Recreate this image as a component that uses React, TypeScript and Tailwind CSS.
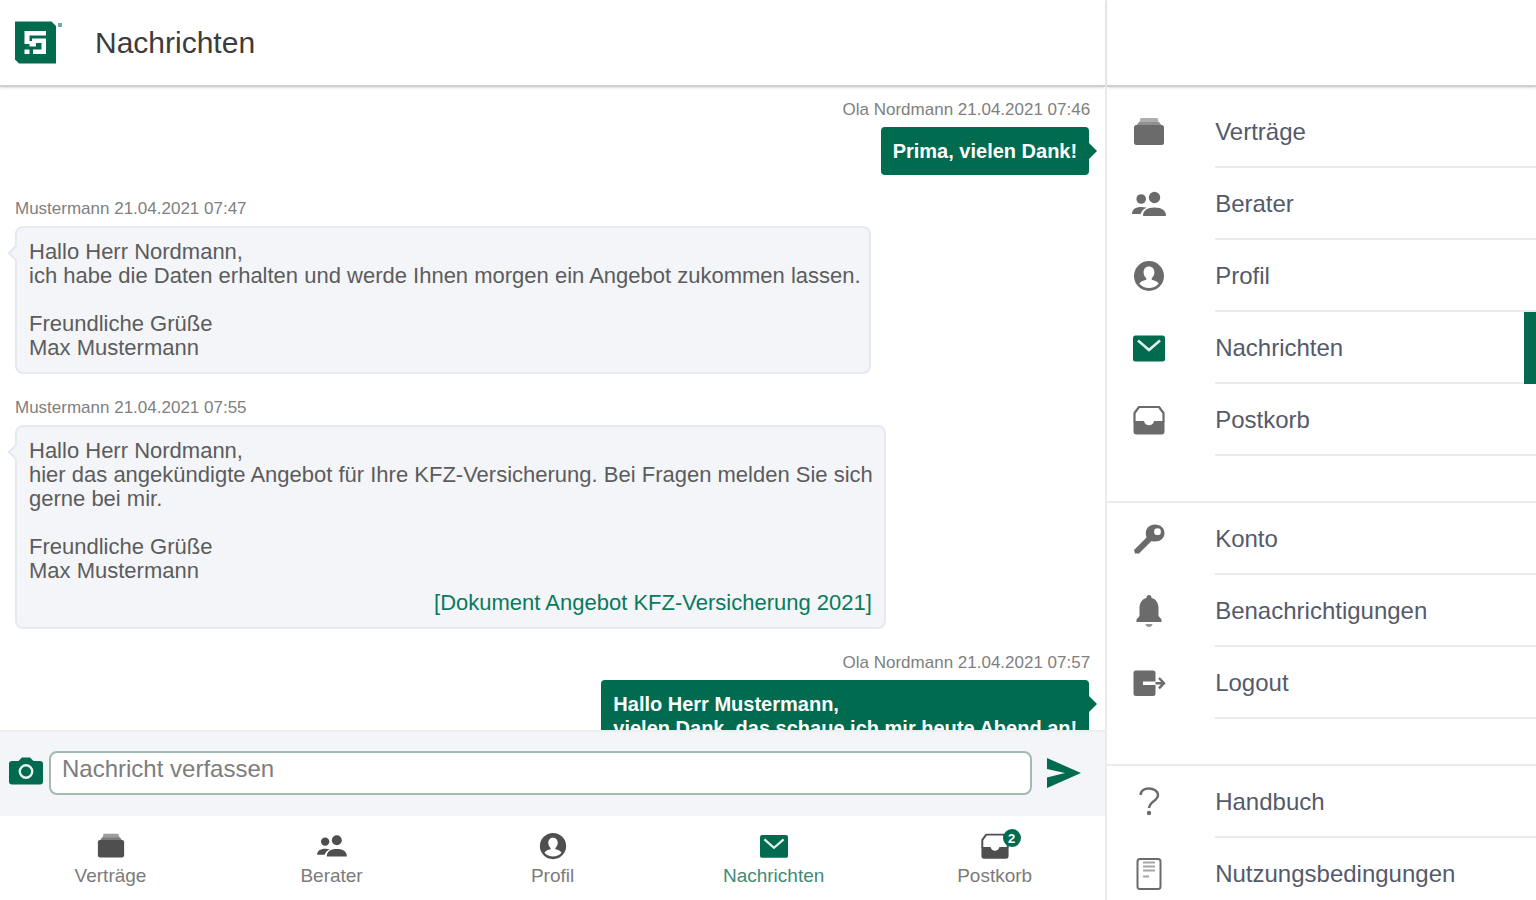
import React from "react";

type IconProps = { className?: string };

function ContractsIcon({ className }: IconProps) {
  return (
    <svg viewBox="0 0 32 32" className={className} fill="currentColor" aria-hidden="true">
      <path d="M7.500 2h17l1 4h-19z" opacity="0.55" />
      <path d="M6 6h20l3 4H3z" opacity="0.75" />
      <rect x="1" y="9" width="30" height="20" rx="2.500" />
    </svg>
  );
}

function PeopleIcon({ className }: IconProps) {
  return (
    <svg viewBox="0 0 32 32" className={className} fill="currentColor" aria-hidden="true">
      <circle cx="21.500" cy="9.500" r="5.700" />
      <circle cx="8.200" cy="11" r="4.800" />
      <path d="M10 28c0-5.500 4-8.500 11.500-8.500S33 22.500 33 28z" />
      <path d="M-1 26c0-4.500 3.500-7 9.500-7 1.800 0 3.500.2 5 .7C10.500 21 8.500 23 7.600 26z" />
    </svg>
  );
}

function ProfileIcon({ className }: IconProps) {
  return (
    <svg viewBox="0 0 32 32" className={className} fill="currentColor" aria-hidden="true">
      <path
        fillRule="evenodd"
        d="M16 1a15 15 0 1 0 0 30 15 15 0 0 0 0-30zm0 5.500c3.300 0 5.400 2.400 5.400 5.800 0 2.600-1.100 4.700-2.700 5.900v1.500c3.500.7 6 2 7 4a13 13 0 0 1-19.400 0c1-2 3.500-3.300 7-4v-1.500c-1.600-1.200-2.700-3.300-2.700-5.900 0-3.400 2.100-5.800 5.400-5.800z"
      />
    </svg>
  );
}

function MailIcon({ className }: IconProps) {
  return (
    <svg viewBox="0 0 32 32" className={className} aria-hidden="true">
      <rect x="0" y="3.500" width="32" height="26" rx="2.500" fill="currentColor" />
      <path d="M5 8.500l11 9.500 11-9.500" fill="none" stroke="#e3f1ec" strokeWidth="2.600" />
    </svg>
  );
}

function InboxIcon({ className }: IconProps) {
  return (
    <svg viewBox="0 0 32 32" className={className} aria-hidden="true">
      <path d="M1.500 18V9l4.500-6h20l4.500 6v9" fill="none" stroke="currentColor" strokeWidth="2.200" strokeLinejoin="round" />
      <path d="M.5 17H11c.7 3 2.500 4.300 5 4.300s4.300-1.300 5-4.300h10.500v10.500A3 3 0 0 1 28.500 30.500h-25a3 3 0 0 1-3-3z" fill="currentColor" />
    </svg>
  );
}

function KeyIcon({ className }: IconProps) {
  return (
    <svg viewBox="0 0 32 32" className={className} aria-hidden="true">
      <path
        fillRule="evenodd"
        fill="currentColor"
        d="M22 1.500c5.500 0 9.500 3.500 9.500 8.500s-4 8.500-9.500 8.500c-1.300 0-2.500-.2-3.500-.6L6 30.500H2L1 27 13.500 14.500c-.4-1.200-.7-2.800-.7-4.200C12.800 5 16.500 1.500 22 1.500zm2.500 3.800a3.400 3.400 0 1 0 0 6.800 3.400 3.400 0 0 0 0-6.800z"
      />
    </svg>
  );
}

function BellIcon({ className }: IconProps) {
  return (
    <svg viewBox="0 0 32 32" className={className} fill="currentColor" aria-hidden="true">
      <path d="M16 0c1.500 0 2.500 1 2.500 2.500v.6C23 4.300 25.500 8 25.500 13v8l3 3.500V27h-25v-2.500l3-3.500v-8c0-5 2.500-8.700 7-9.900v-.6C13.500 1 14.500 0 16 0z" />
      <path d="M12.500 29h7c-.3 1.800-1.600 3-3.500 3s-3.200-1.200-3.500-3z" opacity="0.7" />
    </svg>
  );
}

function LogoutIcon({ className }: IconProps) {
  return (
    <svg viewBox="0 0 32 32" className={className} aria-hidden="true">
      <path d="M3 3.500h17a2.500 2.500 0 0 1 2.500 2.500v8.500H10v3.500h12.500v8.500a2.500 2.500 0 0 1-2.500 2.500H3A2.500 2.500 0 0 1 .5 26.500V6A2.500 2.500 0 0 1 3 3.500z" fill="currentColor" />
      <path d="M22.500 16.200h8M26 11l5 5.200-5 5.200" fill="none" stroke="currentColor" strokeWidth="2.400" />
    </svg>
  );
}

function QuestionIcon({ className }: IconProps) {
  return (
    <svg viewBox="0 0 32 32" className={className} aria-hidden="true">
      <path d="M7.500 9c.5-4.300 4-6.500 8.500-6.500s9 2.500 9 6.700c0 5.500-8.500 6-9 12.800" fill="none" stroke="currentColor" strokeWidth="2.400" />
      <circle cx="16" cy="27" r="2.200" fill="currentColor" />
    </svg>
  );
}

function TermsIcon({ className }: IconProps) {
  return (
    <svg viewBox="0 0 32 32" className={className} fill="none" stroke="currentColor" aria-hidden="true">
      <rect x="4.500" y="1" width="23" height="30" rx="2.500" strokeWidth="2" />
      <path d="M10 4.500h12M10 8.500h12M10 12.500h12M10 18.500h6" strokeWidth="1.800" opacity="0.6" />
    </svg>
  );
}

function CameraIcon({ className }: IconProps) {
  return (
    <svg viewBox="0 0 34 28" className={className} aria-hidden="true">
      <path d="M3 4h6.500L13 .5h8L24.500 4H31a3 3 0 0 1 3 3v17.500a3 3 0 0 1-3 3H3a3 3 0 0 1-3-3V7a3 3 0 0 1 3-3z" fill="currentColor" />
      <circle cx="17" cy="14.500" r="6.200" fill="none" stroke="#e9f3f0" strokeWidth="2.400" />
    </svg>
  );
}

function SendIcon({ className }: IconProps) {
  return (
    <svg viewBox="0 0 34 30" className={className} fill="currentColor" aria-hidden="true">
      <path d="M0 0l34 15L0 30V19.500L18 15 0 11z" />
    </svg>
  );
}

function Logo() {
  return (
    <svg viewBox="0 0 48 44" className="h-11 w-12 shrink-0" aria-label="Logo" role="img">
      <path d="M0 .5h36.500L41 5v37.500H4L0 38.500z" fill="#006b4f" />
      <path
        d="M9.500 10H31v4.500H14.500V20H17v-2.500h14V33H18v-4.500h8.500V22H21v3.500h-6.500V23h-5zM9.500 28.500h5V33h-5z"
        fill="#fff"
      />
      <rect x="43" y="2" width="4" height="4" fill="#6fae99" />
    </svg>
  );
}

type MenuItem = { label: string; icon: (p: IconProps) => React.ReactElement; active?: boolean };

const menuGroups: MenuItem[][] = [
  [
    { label: "Verträge", icon: ContractsIcon },
    { label: "Berater", icon: PeopleIcon },
    { label: "Profil", icon: ProfileIcon },
    { label: "Nachrichten", icon: MailIcon, active: true },
    { label: "Postkorb", icon: InboxIcon },
  ],
  [
    { label: "Konto", icon: KeyIcon },
    { label: "Benachrichtigungen", icon: BellIcon },
    { label: "Logout", icon: LogoutIcon },
  ],
  [
    { label: "Handbuch", icon: QuestionIcon },
    { label: "Nutzungsbedingungen", icon: TermsIcon },
  ],
];

const tabs: (MenuItem & { badge?: string })[] = [
  { label: "Verträge", icon: ContractsIcon },
  { label: "Berater", icon: PeopleIcon },
  { label: "Profil", icon: ProfileIcon },
  { label: "Nachrichten", icon: MailIcon, active: true },
  { label: "Postkorb", icon: InboxIcon, badge: "2" },
];

type Message = { meta: string; own?: boolean; text: string; attachment?: string };

const messages: Message[] = [
  { meta: "Ola Nordmann 21.04.2021 07:46", own: true, text: "Prima, vielen Dank!" },
  {
    meta: "Mustermann 21.04.2021 07:47",
    text: "Hallo Herr Nordmann,\nich habe die Daten erhalten und werde Ihnen morgen ein Angebot zukommen lassen.\n\nFreundliche Grüße\nMax Mustermann",
  },
  {
    meta: "Mustermann 21.04.2021 07:55",
    text: "Hallo Herr Nordmann,\nhier das angekündigte Angebot für Ihre KFZ-Versicherung. Bei Fragen melden Sie sich gerne bei mir.\n\nFreundliche Grüße\nMax Mustermann",
    attachment: "[Dokument Angebot KFZ-Versicherung 2021]",
  },
  {
    meta: "Ola Nordmann 21.04.2021 07:57",
    own: true,
    text: "Hallo Herr Mustermann,\nvielen Dank, das schaue ich mir heute Abend an!",
  },
];

function MessageItem({ message }: { message: Message }) {
  if (message.own) {
    return (
      <li className="flex flex-col items-end">
        <p className="mb-[5px] text-[17px] leading-6 text-[#808080]">{message.meta}</p>
        <div className="relative mr-px max-w-[81%] rounded bg-[#006b4f] p-3 text-[20px] font-bold leading-6 text-white">
          <p className="whitespace-pre-line">{message.text}</p>
          <span className="absolute left-full top-4 h-0 w-0 border-y-8 border-l-8 border-y-transparent border-l-[#006b4f]" />
        </div>
      </li>
    );
  }
  return (
    <li className="flex flex-col items-start">
      <p className="mb-[5px] text-[17px] leading-6 text-[#808080]">{message.meta}</p>
      <div className="relative max-w-[81%] rounded-lg border-2 border-[#e6e9ed] bg-[#f3f5f9] py-3 pl-3 pr-2 text-[22px] leading-6 text-[#5c5c5c]">
        <span className="absolute -left-[7px] top-[19px] h-3 w-3 rotate-45 border-b-2 border-l-2 border-[#e6e9ed] bg-[#f3f5f9]" />
        <p className="whitespace-pre-line">{message.text}</p>
        {message.attachment && (
          <a href="#dokument" className="mr-1 mt-2 block text-right text-[#0a7a5c]">
            {message.attachment}
          </a>
        )}
      </div>
    </li>
  );
}

export default function App() {
  return (
    <div className="flex h-screen overflow-hidden bg-white font-['Liberation_Sans',Arial,sans-serif]">
      <main className="flex min-w-0 flex-1 flex-col">
        <header className="flex h-[87px] shrink-0 items-center gap-8 border-b-2 border-[#cfcfcf] pl-[15px] shadow-sm">
          <Logo />
          <h1 className="text-[30px] leading-9 text-[#3c3c3c]">Nachrichten</h1>
        </header>

        <ul className="flex min-h-0 flex-1 flex-col gap-[22px] overflow-hidden px-[15px] pt-[11px]">
          {messages.map((m) => (
            <MessageItem key={m.meta} message={m} />
          ))}
        </ul>

        <form
          className="flex h-[86px] shrink-0 items-center border-t-2 border-[#eceff2] bg-[#f3f5f9] pb-[2px] pl-[9px] pr-6"
          onSubmit={(e) => e.preventDefault()}
        >
          <button type="button" aria-label="Foto anhängen" className="mb-1 mr-[6px] shrink-0 text-[#006b4f]">
            <CameraIcon className="h-7 w-[34px]" />
          </button>
          <textarea
            aria-label="Nachricht verfassen"
            placeholder="Nachricht verfassen"
            rows={1}
            className="block h-[44px] min-w-0 flex-1 resize-none overflow-hidden rounded-lg border-2 border-[#a3bab2] bg-white px-[11px] py-[2px] text-[24px] leading-7 text-[#3c3c3c] outline-none placeholder:text-[#7d7d7d]"
          />
          <button type="submit" aria-label="Senden" className="ml-[15px] shrink-0 text-[#006b4f]">
            <SendIcon className="h-[30px] w-[34px]" />
          </button>
        </form>

        <nav aria-label="Hauptnavigation" className="grid h-[84px] shrink-0 grid-cols-5">
          {tabs.map(({ label, icon: Icon, active, badge }) => (
            <a key={label} href={`#${label}`} className="flex flex-col items-center gap-1 pt-4">
              <span className={active ? "relative text-[#006b4f]" : "relative text-[#4f4f4f]"}>
                <Icon className="h-7 w-7 overflow-visible" />
                {badge && (
                  <span className="absolute -right-[12px] -top-[3px] flex h-[18px] w-[18px] items-center justify-center rounded-full bg-[#006b4f] text-[13px] font-bold leading-none text-white">
                    {badge}
                  </span>
                )}
              </span>
              <span className={active ? "text-[19px] leading-6 text-[#3f8a75]" : "text-[19px] leading-6 text-[#7b7b7b]"}>
                {label}
              </span>
            </a>
          ))}
        </nav>
      </main>

      <aside className="flex w-[28.05%] shrink-0 flex-col border-l-2 border-[#ebebeb]">
        <div className="h-[87px] shrink-0 border-b-2 border-[#cfcfcf] shadow-sm" />
        <nav aria-label="Menü" className="min-h-0 flex-1 overflow-hidden pt-[9px]">
          {menuGroups.map((group, i) => (
            <ul key={group[0].label} className={i < menuGroups.length - 1 ? "border-b-2 border-[#ebebeb] pb-[45px]" : ""}>
              {group.map(({ label, icon: Icon, active }) => (
                <li key={label}>
                  <a href={`#menu-${label}`} className="flex h-[72px] items-center pl-[26px]">
                    <Icon className={active ? "h-8 w-8 shrink-0 overflow-visible text-[#006b4f]" : "h-8 w-8 shrink-0 overflow-visible text-[#6b6b6b]"} />
                    <span className="ml-[50px] flex h-full flex-1 items-center border-b-2 border-[#ebebeb] pt-[2px] text-[24px] leading-8 text-[#555a6b]">
                      {label}
                    </span>
                    {active && <span className="h-full w-3 bg-[#006b4f]" />}
                  </a>
                </li>
              ))}
            </ul>
          ))}
        </nav>
      </aside>
    </div>
  );
}
